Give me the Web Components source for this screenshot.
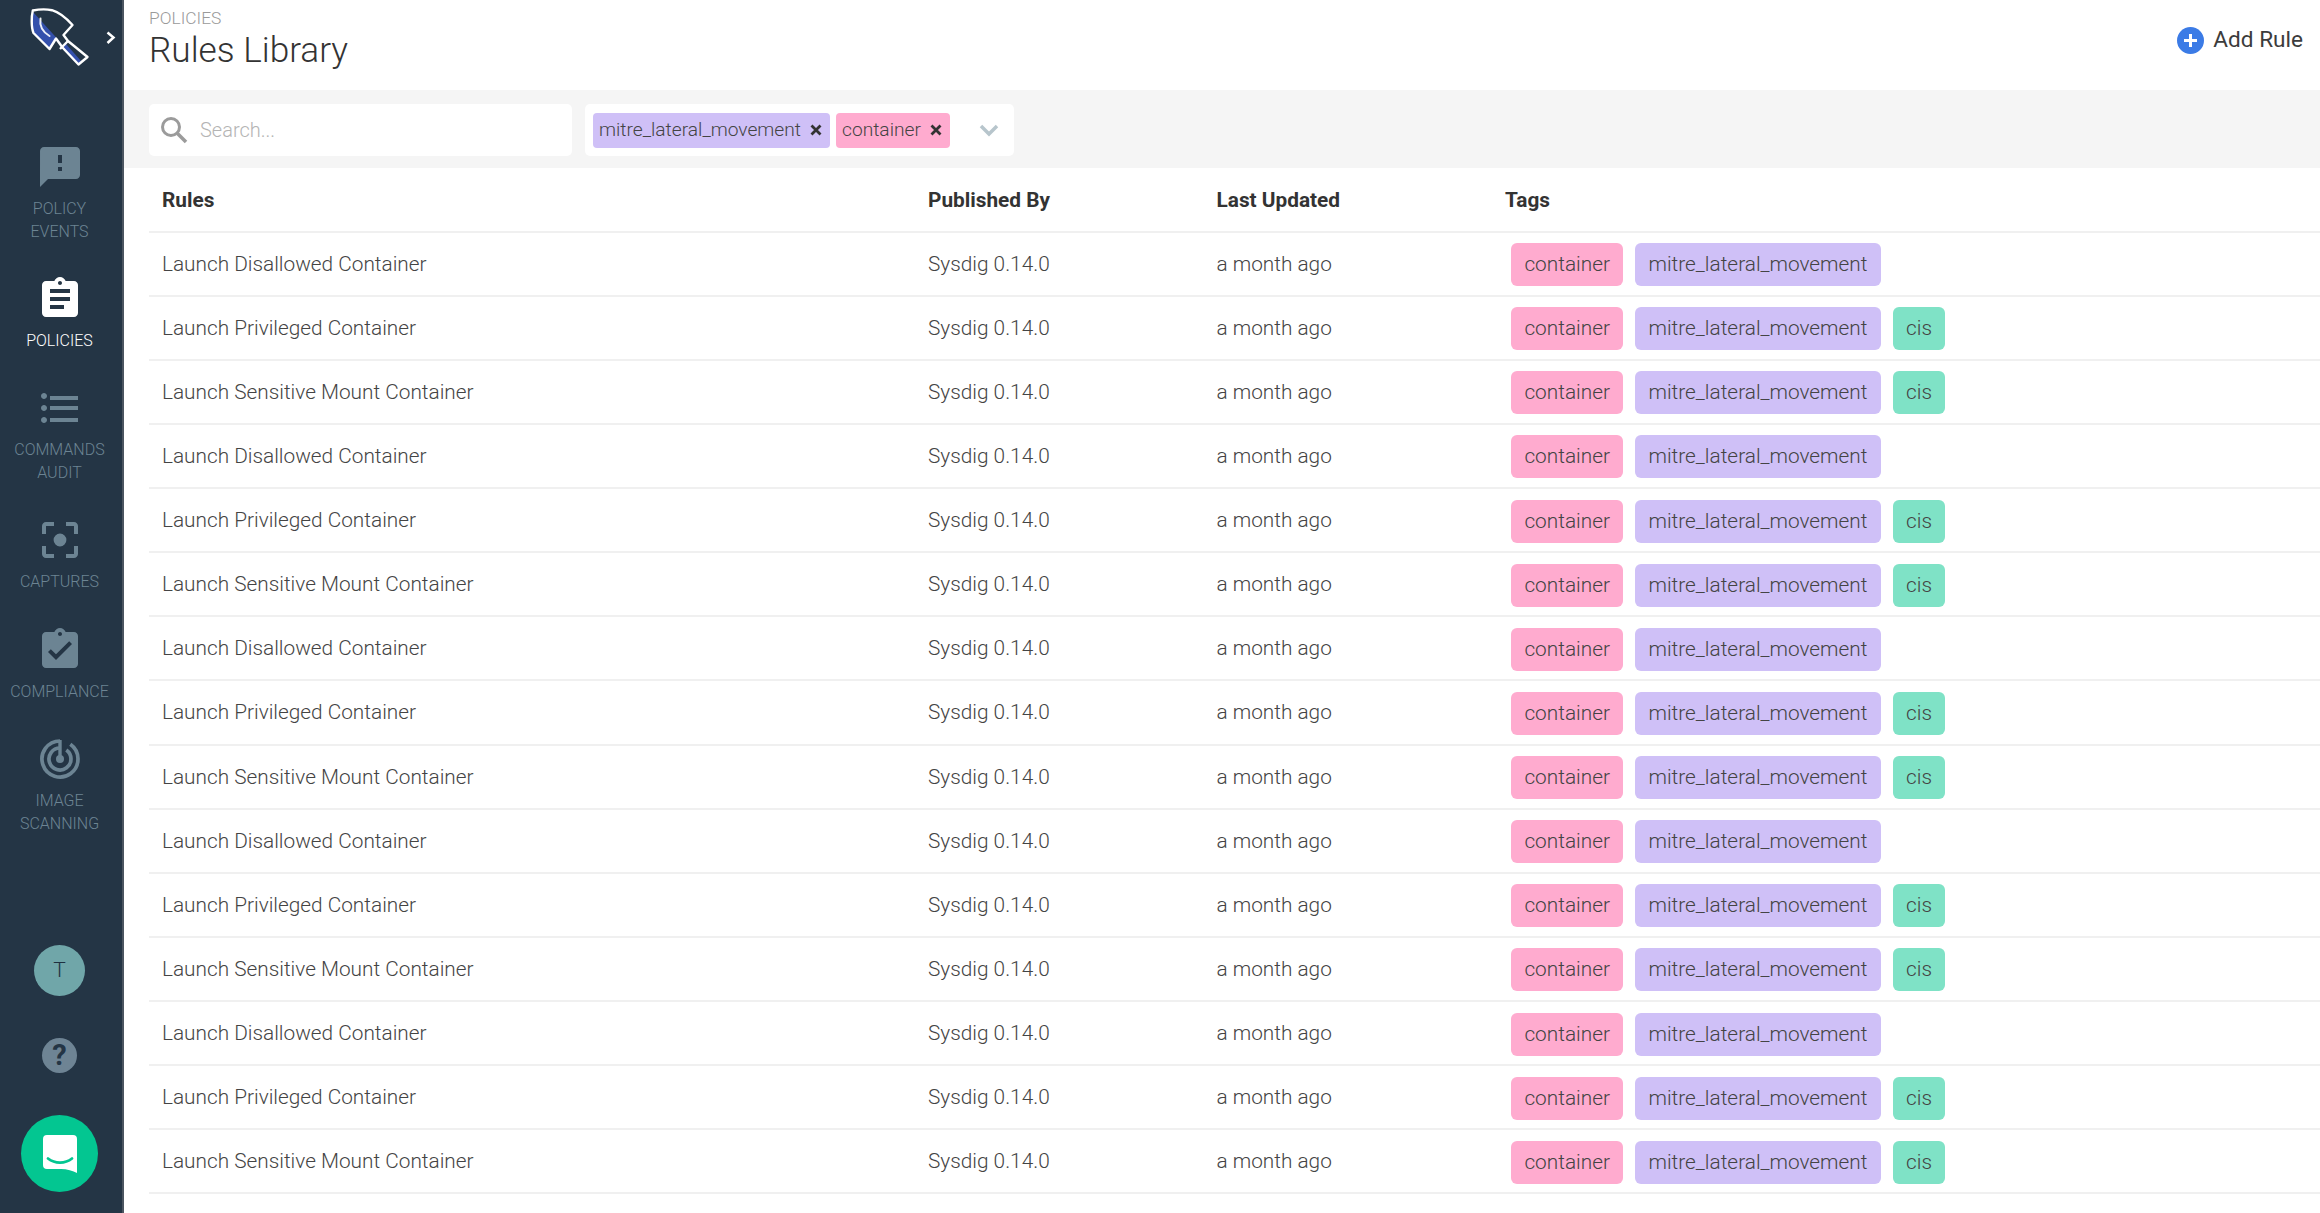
<!DOCTYPE html>
<html><head><meta charset="utf-8"><style>
html,body{margin:0;padding:0;height:100%;overflow:hidden;background:#fff;font-family:Roboto,"Liberation Sans",sans-serif}
</style></head><body>
<app-shell></app-shell>
<script>
const ICONS={
events:'<path d="M20 2H4c-1.1 0-1.99.9-1.99 2L2 22l4-4h14c1.1 0 2-.9 2-2V4c0-1.1-.9-2-2-2zm-7 12h-2v-2h2v2zm0-4h-2V6h2v4z"/>',
policies:'<path d="M19 3h-4.18C14.4 1.84 13.3 1 12 1c-1.3 0-2.4.84-2.82 2H5c-1.1 0-2 .9-2 2v14c0 1.1.9 2 2 2h14c1.1 0 2-.9 2-2V5c0-1.1-.9-2-2-2zm-7 0c.55 0 1 .45 1 1s-.45 1-1 1-1-.45-1-1 .45-1 1-1zm2 14H7v-2h7v2zm3-4H7v-2h10v2zm0-4H7V7h10v2z"/>',
audit:'<path d="M4 10.5c-.83 0-1.5.67-1.5 1.5s.67 1.5 1.5 1.5 1.5-.67 1.5-1.5-.67-1.5-1.5-1.5zm0-6c-.83 0-1.5.67-1.5 1.5S3.17 7.5 4 7.5 5.5 6.83 5.5 6 4.83 4.5 4 4.5zm0 12c-.83 0-1.5.68-1.5 1.5s.68 1.5 1.5 1.5 1.5-.68 1.5-1.5-.67-1.5-1.5-1.5zM7 19h14v-2H7v2zm0-6h14v-2H7v2zm0-7v2h14V6H7z"/>',
captures:'<path d="M12 8.8a3.2 3.2 0 1 0 0 6.4 3.2 3.2 0 0 0 0-6.4zm-7 6.2H3v4c0 1.1.9 2 2 2h4v-2H5v-4zM5 5h4V3H5c-1.1 0-2 .9-2 2v4h2V5zm14-2h-4v2h4v4h2V5c0-1.1-.9-2-2-2zm0 16h-4v2h4c1.1 0 2-.9 2-2v-4h-2v4z"/>',
compliance:'<path d="M19 3h-4.18C14.4 1.84 13.3 1 12 1c-1.3 0-2.4.84-2.82 2H5c-1.1 0-2 .9-2 2v14c0 1.1.9 2 2 2h14c1.1 0 2-.9 2-2V5c0-1.1-.9-2-2-2zm-7 0c.55 0 1 .45 1 1s-.45 1-1 1-1-.45-1-1 .45-1 1-1zm-2 14l-4-4 1.41-1.41L10 14.17l6.59-6.59L18 9l-8 8z"/>',
scanning:'<g fill="none" stroke="currentColor" stroke-width="1.850"><path d="M17.160 4.630A9 9 0 1 1 12 3"/><path d="M15.150 7.500A5.500 5.500 0 1 1 12 6.500"/><path d="M12 2.500V12" stroke-width="1.700"/></g><circle cx="12" cy="12" r="2"/>'
};
class NavItem extends HTMLElement{
  constructor(){super();const r=this.attachShadow({mode:'open'});
    const icon=this.getAttribute('icon'),a=this.hasAttribute('active');
    r.innerHTML=`<style>
    :host{display:flex;flex-direction:column;align-items:center;padding-bottom:31.500px;color:${a?'#fff':'#6c8493'}}
    svg{width:48px;height:48px;fill:currentColor;display:block;margin-bottom:7px}
    .l{font:300 16px/22.8px Roboto,sans-serif;text-align:center;white-space:pre-line}
    </style><svg viewBox="0 0 24 24">${ICONS[icon]}</svg><div class="l"><slot></slot></div>`;}
}
customElements.define('nav-item',NavItem);
class SideBar extends HTMLElement{
  constructor(){super();this.attachShadow({mode:'open'}).innerHTML=`<style>
    :host{display:flex;flex-direction:column;width:122px;flex:none;background:#243545;border-right:2px solid #4b5560;height:100%;box-sizing:content-box}
    .logo{display:block;height:143px;width:122px;flex:none}
    .nav{display:flex;flex-direction:column;padding-right:3px}
    .bottom{margin-top:auto;display:flex;flex-direction:column;align-items:center;padding:0 3px 21px 0}
    .av{width:51px;height:51px;border-radius:50%;background:#70a6a9;color:#1f3040;font:300 21px/51px Roboto,sans-serif;text-align:center}
    .help{width:35px;height:35px;border-radius:50%;background:#6e8494;color:#243545;font:700 29px/35px Roboto,sans-serif;text-align:center;margin-top:42px}
    .chat{width:77px;height:77px;border-radius:50%;background:#03c691;display:flex;align-items:center;justify-content:center;margin-top:42px}
    .chat svg{width:34px;height:38px;display:block}
    </style>
    <svg class="logo" viewBox="0 0 122 143">
      <path d="M33 12 63 45 56 38 49 49 33.5 33C31 27 31 16 33 12Z" fill="#3450ac"/>
      <path d="M66 44 81 61 78 64 62 47Z" fill="#3450ac"/>
      <path d="M32.800 10.500C38 9.500 46 9 52 10.200 60 12.500 67 19 72.500 25L63.500 35 68 41 87.500 57 78.500 64.500 62.500 47.500 56 38.500 49.500 49 33.500 33C31 27 31.500 16 32.800 10.500Z" fill="none" stroke="#fff" stroke-width="2.400" stroke-linejoin="round"/>
      <path d="M68 41 60 49" fill="none" stroke="#fff" stroke-width="2.400"/>
      <path d="M40.500 18.500C39.500 25 41 31 49.500 36" fill="none" stroke="#fff" stroke-width="2" stroke-linecap="round" opacity=".9"/>
      <path d="M107.500 32.500 113.500 37.500 107.500 43" fill="none" stroke="#fff" stroke-width="2.500"/>
    </svg>
    <div class="nav"><slot></slot></div>
    <div class="bottom">
      <div class="av">T</div>
      <div class="help">?</div>
      <div class="chat"><svg viewBox="0 0 34 38"><path d="M4 0H30a4 4 0 0 1 4 4V38C30 36 24 34 18 34H4a4 4 0 0 1-4-4V4a4 4 0 0 1 4-4Z" fill="#fff"/><path d="M5 23.500C12 29 22 29 29 23.500" fill="none" stroke="#03c691" stroke-width="2.800" stroke-linecap="round"/></svg></div>
    </div>`;}
}
customElements.define('side-bar',SideBar);
class PageHeader extends HTMLElement{
  constructor(){super();this.attachShadow({mode:'open'}).innerHTML=`<style>
    :host{display:flex;justify-content:space-between;align-items:center;height:90px;padding:0 17px 4px 25px;box-sizing:border-box;flex:none;background:#fff}
    .c{font:300 17.4px/20px Roboto,sans-serif;color:#9a9a9a;margin-top:-7px}
    h1{margin:0;font:300 35.2px/42px Roboto,sans-serif;color:#333;margin-top:1px}
    .add{display:flex;align-items:center;gap:9px;font:400 22.6px/28px Roboto,sans-serif;color:#3c3c3c;margin-top:-6px}
    svg{width:27px;height:27px;display:block}
    </style><div><div class="c">POLICIES</div><h1>Rules Library</h1></div>
    <div class="add"><svg viewBox="0 0 27 27"><circle cx="13.500" cy="13.500" r="13.500" fill="#3b7be6"/><path d="M7 13.500H20M13.500 7V20" stroke="#fff" stroke-width="3"/></svg>Add Rule</div>`;}
}
customElements.define('page-header',PageHeader);
class FilterChip extends HTMLElement{
  constructor(){super();const c=this.getAttribute('color');this.attachShadow({mode:'open'}).innerHTML=`<style>
    :host{display:inline-flex;align-items:center;height:35px;padding:0 8px 0 6px;gap:9px;background:${c};border-radius:4px;font:300 19.200px/34px Roboto,sans-serif;color:#444}
    svg{width:12px;height:12px;display:block}
    </style><slot></slot><svg viewBox="0 0 12 12"><path d="M1.500 1.500 10.500 10.500M10.500 1.500 1.500 10.500" stroke="#333" stroke-width="2.800"/></svg>`;}
}
customElements.define('filter-chip',FilterChip);
class FilterBar extends HTMLElement{
  constructor(){super();this.attachShadow({mode:'open'}).innerHTML=`<style>
    :host{display:flex;align-items:center;gap:13px;height:78px;padding:2px 25px 0;box-sizing:border-box;background:#f5f5f5;flex:none}
    .box{height:52px;background:#fff;border-radius:5px;box-sizing:border-box;display:flex;align-items:center}
    .search{width:423px;padding-left:10px;gap:11px;font:300 20px Roboto,sans-serif;color:#b4b4b4}
    .search svg{width:30px;height:30px;display:block}
    .sel{width:429px;padding-left:8px;gap:6px}
    .sel .chev{width:22px;height:14px;display:block;margin-left:auto;margin-right:14px}
    </style>
    <div class="box search"><svg viewBox="0 0 30 30"><circle cx="12" cy="12" r="8.500" fill="none" stroke="#9b9b9b" stroke-width="3"/><path d="M18.500 18.500 27 27" stroke="#9b9b9b" stroke-width="3.500"/></svg><span>Search...</span></div>
    <div class="box sel"><filter-chip color="#cfc0f7">mitre_lateral_movement</filter-chip><filter-chip color="#ffabcf">container</filter-chip>
    <svg class="chev" viewBox="0 0 22 14"><path d="M3 3 11 11 19 3" fill="none" stroke="#b7c5cc" stroke-width="3.500"/></svg></div>`;}
}
customElements.define('filter-bar',FilterBar);
class TagPill extends HTMLElement{
  constructor(){super();this.attachShadow({mode:'open'}).innerHTML=`<style>
    :host{display:inline-block;height:43px;padding:0 13.400px;border-radius:6px;background:var(--c);font:300 20.800px/43px Roboto,sans-serif;color:#444}
    </style><slot></slot>`;}
}
customElements.define('tag-pill',TagPill);
const GRID='grid-template-columns:779px 288.500px 288.500px 1fr';
class RuleRow extends HTMLElement{
  constructor(){super();const cis=this.hasAttribute('cis');this.attachShadow({mode:'open'}).innerHTML=`<style>
    :host{display:grid;${GRID};align-items:center;height:64.130px;box-sizing:border-box;border-bottom:2px solid #f0f0f0;font:300 20.800px Roboto,sans-serif;color:#444}
    .n{padding-left:13px}
    .t{display:flex;gap:11.800px;padding:2px 0 0 6px;color:#444}
    </style><div class="n"><slot></slot></div><div>Sysdig 0.14.0</div><div>a month ago</div>
    <div class="t"><tag-pill style="--c:#ffabcf">container</tag-pill><tag-pill style="--c:#cfc0f7">mitre_lateral_movement</tag-pill>${cis?'<tag-pill style="--c:#7fe2c6">cis</tag-pill>':''}</div>`;}
}
customElements.define('rule-row',RuleRow);
class RulesTable extends HTMLElement{
  constructor(){super();const r=this.attachShadow({mode:'open'});
    const names=[['Launch Disallowed Container',0],['Launch Privileged Container',1],['Launch Sensitive Mount Container',1]];
    let rows='';for(let i=0;i<15;i++){const[n,c]=names[i%3];rows+=`<rule-row${c?' cis':''}>${n}</rule-row>`;}
    r.innerHTML=`<style>
    :host{display:block;margin-left:25px}
    .h{display:grid;${GRID};align-items:center;height:64.500px;padding-top:2px;box-sizing:border-box;border-bottom:2px solid #f0f0f0;font:700 20.800px Roboto,sans-serif;color:#333}
    .h div:first-child{padding-left:13px}
    </style><div class="h"><div>Rules</div><div>Published By</div><div>Last Updated</div><div>Tags</div></div>${rows}`;}
}
customElements.define('rules-table',RulesTable);
class AppShell extends HTMLElement{
  constructor(){super();this.attachShadow({mode:'open'}).innerHTML=`<style>
    :host{display:flex;width:100%;height:100vh;overflow:hidden}
    main{flex:1;min-width:0;display:flex;flex-direction:column;background:#fff}
    </style>
    <side-bar>
      <nav-item icon="events">POLICY
EVENTS</nav-item>
      <nav-item icon="policies" active>POLICIES</nav-item>
      <nav-item icon="audit">COMMANDS
AUDIT</nav-item>
      <nav-item icon="captures">CAPTURES</nav-item>
      <nav-item icon="compliance">COMPLIANCE</nav-item>
      <nav-item icon="scanning">IMAGE
SCANNING</nav-item>
    </side-bar>
    <main><page-header></page-header><filter-bar></filter-bar><rules-table></rules-table></main>`;}
}
customElements.define('app-shell',AppShell);
</script></body></html>
